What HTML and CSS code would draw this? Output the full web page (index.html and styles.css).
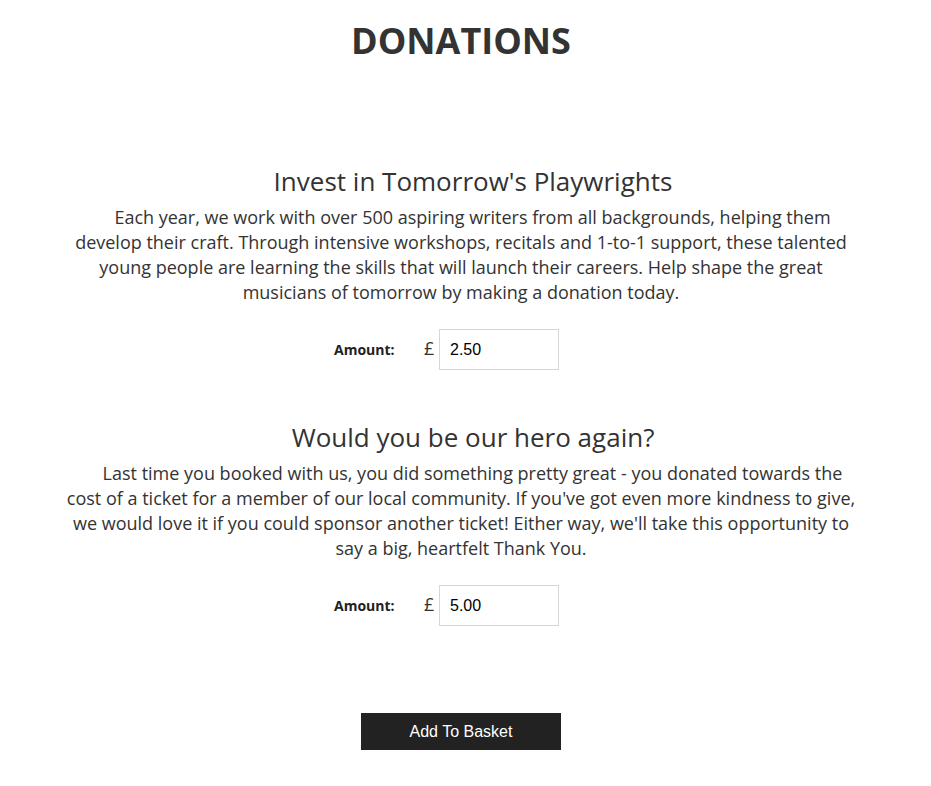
FILE: index.html
```html
<html>
<head>
<link rel="stylesheet" href="styles.css">
</head>
<body>
<div class="page">
    <h1 class="page-title">DONATIONS</h1>

    <div class="donation first">
        <h2>Invest in Tomorrow's Playwrights</h2>
        <p>Each year, we work with over 500 aspiring writers from all backgrounds, helping them develop their craft. Through intensive workshops, recitals and 1-to-1 support, these talented young people are learning the skills that will launch their careers. Help shape the great musicians of tomorrow by making a donation today.</p>
        <div class="amount">
            <label for="amount-1">Amount:</label>
            <span class="currency">&pound;</span>
            <input type="text" id="amount-1" value="2.50">
        </div>
    </div>

    <div class="donation">
        <h2>Would you be our hero again?</h2>
        <p>Last time you booked with us, you did something pretty great - you donated towards the cost of a ticket for a member of our local community. If you've got even more kindness to give, we would love it if you could sponsor another ticket! Either way, we'll take this opportunity to say a big, heartfelt Thank You.</p>
        <div class="amount">
            <label for="amount-2">Amount:</label>
            <span class="currency">&pound;</span>
            <input type="text" id="amount-2" value="5.00">
        </div>
    </div>

    <div class="btn-container">
        <button class="basket-button">Add To Basket</button>
    </div>
</div>
</body>
</html>
```

FILE: styles.css
```css
body {
    margin: 0;
    color: #333333;
    background: #fff;
    font: 18px "Open Sans", Arial, sans-serif;
}
.page {
    width: 922px;
    text-align: center;
}
.page-title {
    margin: 15px 0 0 0;
    font-size: 36px;
    line-height: 52px;
    font-weight: 700;
}
.donation {
    margin-top: 49px;
}
.donation.first {
    margin-top: 96px;
}
.donation h2 {
    margin: 0;
    font-size: 26px;
    font-weight: 400;
    line-height: 36px;
    text-indent: 24px;
}
.donation p {
    width: 800px;
    margin: 6px auto 0 auto;
    line-height: 25px;
    text-indent: 23px;
}
.amount {
    display: flex;
    justify-content: center;
    align-items: center;
    margin-top: 24px;
    padding-right: 29px;
}
.amount label {
    width: 90px;
    text-align: left;
    font-size: 14px;
    font-weight: 700;
    color: #222;
}
.currency {
    width: 15px;
    text-align: left;
    font-size: 18px;
    margin-top: -3px;
}
.amount input {
    width: 120px;
    height: 41px;
    box-sizing: border-box;
    border: 1px solid #d6d6d6;
    padding: 0 10px;
    font: 16px Arial, "Liberation Sans", sans-serif;
    color: #000;
    outline: none;
}
.btn-container {
    margin-top: 87px;
}
.basket-button {
    width: 200px;
    height: 37px;
    border: none;
    background: #222222;
    color: #fff;
    font: 16px Arial, "Liberation Sans", sans-serif;
    padding-top: 2px;
    cursor: pointer;
}
```
